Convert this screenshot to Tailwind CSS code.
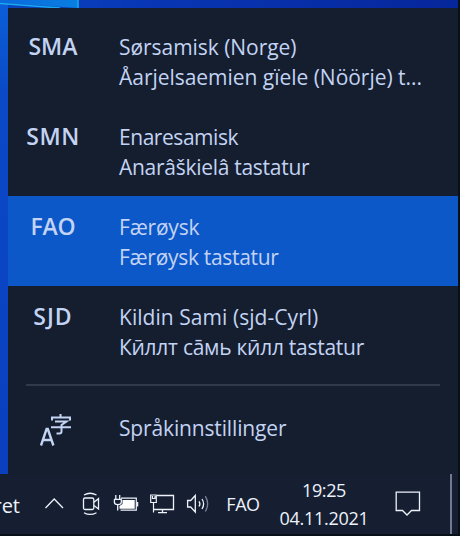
<!DOCTYPE html>
<html lang="nb">
<head>
<meta charset="utf-8">
<title>Språkvelger</title>
<script src="https://cdn.jsdelivr.net/npm/@tailwindcss/browser@4"></script>
</head>
<body class="w-[460px] h-[536px] overflow-hidden bg-[#071019] font-['Open_Sans','Noto_Sans',sans-serif]">
<div class="relative flex flex-col w-[460px] h-[536px] overflow-hidden">
  <!-- desktop wallpaper -->
  <svg class="absolute inset-0" width="460" height="536" viewBox="0 0 460 536">
    <defs>
      <linearGradient id="top" x1="0" x2="1"><stop offset="0" stop-color="#0a45bd"/><stop offset=".3" stop-color="#0837b5"/><stop offset="1" stop-color="#06269b"/></linearGradient>
      <linearGradient id="side" x1="0" x2="0" y1="0" y2="1"><stop offset="0" stop-color="#0b5fd8"/><stop offset=".2" stop-color="#0a49c8"/><stop offset="1" stop-color="#0a3fbd"/></linearGradient>
      <linearGradient id="pane" x1="0" x2="1"><stop offset="0" stop-color="#0b69dc"/><stop offset="1" stop-color="#087fe0"/></linearGradient>
    </defs>
    <rect width="458" height="9" fill="url(#top)"/>
    <rect width="8" height="474" fill="url(#side)"/>
    <path d="M0 0H78V8L0 3Z" fill="url(#pane)"/>
    <path d="M0 3.5L60 8M78 0V8" stroke="#19a9ee" stroke-width="1.5"/>
  </svg>

  <main class="relative ml-2 mt-2 w-[450px] h-[466px] bg-[#151e2f] text-[#c3d3f3] text-[21px] leading-[30px] pt-2">
    <section class="flex h-[90px] pt-[16px]">
      <div class="w-[90px] -mt-px text-center text-[23px] font-semibold"><span class="tracking-[0px]">SMA</span></div>
      <div class="ml-[21px] whitespace-nowrap"><p><span class="tracking-[-0.05px]">Sørsamisk (Norge)</span></p><p><span class="tracking-[-0.03px]">Åarjelsaemien gïele (Nöörje) t...</span></p></div>
    </section>
    <section class="flex h-[90px] pt-[16px]">
      <div class="w-[90px] -mt-px text-center text-[23px] font-semibold"><span class="tracking-[0.5px]">SMN</span></div>
      <div class="ml-[21px] whitespace-nowrap"><p><span class="tracking-[-0.45px]">Enaresamisk</span></p><p><span class="tracking-[-0.28px]">Anarâškielâ tastatur</span></p></div>
    </section>
    <section class="flex h-[90px] pt-[16px] bg-[#0c58c9]">
      <div class="w-[90px] -mt-px text-center text-[23px] font-semibold"><span class="tracking-[-0.2px]">FAO</span></div>
      <div class="ml-[21px] whitespace-nowrap"><p><span class="tracking-[-0.2px]">Færøysk</span></p><p><span class="tracking-[-0.3px]">Færøysk tastatur</span></p></div>
    </section>
    <section class="flex h-[90px] pt-[16px]">
      <div class="w-[90px] -mt-px text-center text-[23px] font-semibold"><span class="tracking-[1px]">SJD</span></div>
      <div class="ml-[21px] whitespace-nowrap"><p><span class="tracking-[0.05px]">Kildin Sami (sjd-Cyrl)</span></p><p><span class="tracking-[-0.27px]">Кӣллт са̄мь кӣлл tastatur</span></p></div>
    </section>
    <div class="mt-2 ml-[18px] w-[414px] h-[2px] bg-[#303a4b]"></div>
    <section class="flex h-[86px] items-center">
      <svg class="ml-[31px]" width="34" height="36" viewBox="39 411 34 36" fill="none" stroke="#c3d3f3">
        <path d="M41 445.5L46.6 429H47.8L53.4 445.5M43 440H51.4" stroke-width="2.4"/>
        <path d="M60.5 414V417M52 420.5V417.5H70V420.5M55 421.5H66.5L61.5 425V431.5Q61.5 433.5 59.5 433.5H56.5M51 427.2H71" stroke-width="2"/>
      </svg>
      <p class="ml-[46px] -mt-[2px]"><span class="tracking-[-0.15px]">Språkinnstillinger</span></p>
    </section>
  </main>

  <footer class="relative flex w-[458px] h-[60px] bg-[#161f31] text-[#edf2fb] text-[18px] leading-7">
    <p class="w-5 h-[60px] overflow-hidden flex justify-end items-center text-[20px] pt-[3px]"><span>ret</span></p>
    <svg class="ml-6" width="166" height="60" viewBox="44 474 166 60" fill="none" stroke="#edf2fb" stroke-width="1.3">
      <path d="M45.5 508L54.2 499L63 508"/>
      <rect x="83.5" y="498" width="10.3" height="11.5" rx="1.5"/>
      <path d="M94 502.2L98.5 498.7V509L94 505.5M84 495Q90 491.5 96.5 495M84 512.7Q90 516.2 96.5 512.7"/>
      <path d="M121 498.2H136.3V510.2H120.5" stroke-width="1.2"/>
      <path d="M122.5 500H134.7V508.8H119.5V506L122.5 504Z" fill="#fff" stroke="none"/>
      <path d="M137.5 502V506.5" stroke-width="1.5"/>
      <path d="M115.8 495V499M119.7 495V499M114 499.3H121.3V502Q121.3 504.6 117.7 504.6Q114.4 504.6 114.4 502V499.3M117.7 504.6V510.5"/>
      <path d="M157 495.5H173.5V509.5H154M162.5 510V512.3M158 512.6H167"/>
      <path d="M150.7 495H156.3V502.5H150.7ZM153.5 502.5V512.5M152.5 496V498.5H155V496" stroke-width="1.2"/>
      <path d="M187.6 500.5H190.7L195.3 495.5V512L190.7 507H187.6Z"/>
      <path d="M199 501.3Q200.8 503.8 199 506.5M202 499Q205.2 503.8 202 509"/>
      <path d="M205.3 496.2Q210 503.8 205.3 511.5" stroke="#77839a"/>
    </svg>
    <p class="w-[66px] text-center pt-[16px]"><span class="tracking-[-0.4px]">FAO</span></p>
    <div class="ml-[2px] w-[92px] text-center pt-[2px] whitespace-nowrap"><p><span class="tracking-[-0.4px]">19:25</span></p><p><span class="tracking-[-0.3px]">04.11.2021</span></p></div>
    <svg class="ml-[23px]" width="30" height="60" viewBox="393 474 30 60" fill="none" stroke="#edf2fb" stroke-width="1.3"><path d="M396.2 492.2H419.5V510.5H411.5L407 515L402.5 510.5H396.2Z"/></svg>
    <div class="ml-[27px] w-[1.5px] h-[60px] bg-[#707b91]"></div>
  </footer>
</div>
</body>
</html>
